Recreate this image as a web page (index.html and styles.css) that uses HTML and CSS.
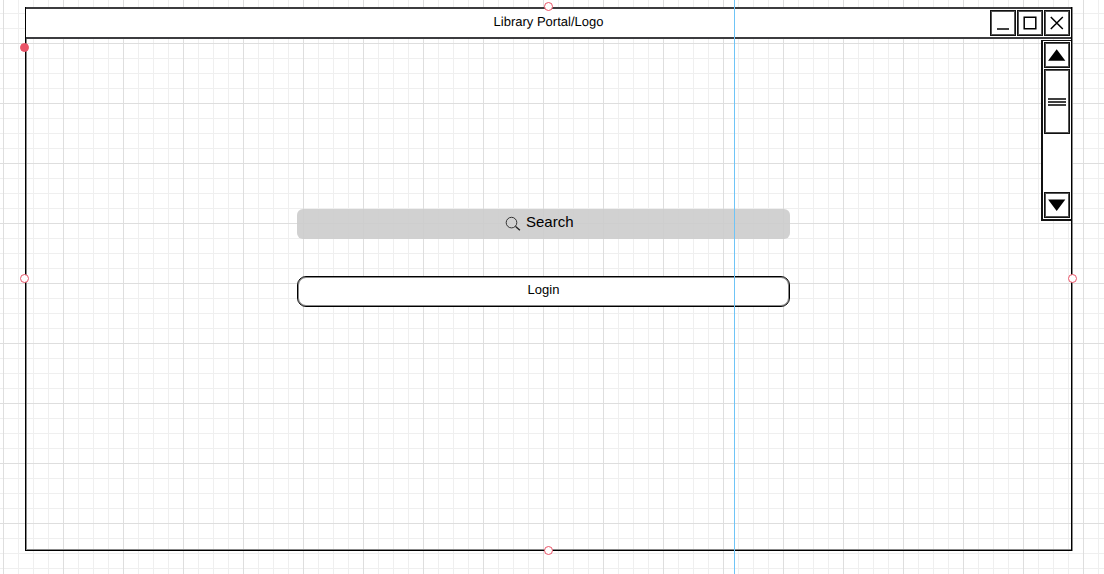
FILE: index.html
```html
<!DOCTYPE html>
<html lang="en">
<head>
<meta charset="utf-8">
<meta name="viewport" content="width=device-width, initial-scale=1">
<title>Library Portal</title>
<link rel="stylesheet" href="styles.css">
</head>
<body>
<div class="canvas">
  <section class="window">
    <header class="titlebar">
      <h1 class="title">Library Portal/Logo</h1>
      <div class="controls">
        <button class="box" type="button" aria-label="Minimize"><svg viewBox="0 0 22 22"><path class="line" d="M5 17h12"/></svg></button>
        <button class="box" type="button" aria-label="Maximize"><svg viewBox="0 0 22 22"><path class="line" d="M5.2 5.2h11.6v11.6h-11.6z"/></svg></button>
        <button class="box" type="button" aria-label="Close"><svg viewBox="0 0 22 22"><path class="line" d="M4.8 5l12 12M16.8 5l-12 12"/></svg></button>
      </div>
    </header>
    <div class="body">
      <main class="content">
        <label class="search">
          <svg class="lens" viewBox="0 0 16 16" aria-hidden="true"><circle cx="6.5" cy="6.6" r="5.3"/><path class="rim" d="M10.3 10.2l1.2 1"/><path class="grip" d="M10.9 10.8l4 3.4"/></svg>
          <input class="query" type="text" placeholder="Search" aria-label="Search">
        </label>
        <button class="login" type="button">Login</button>
      </main>
      <div class="scrollbar">
        <button class="box" type="button" aria-label="Scroll up"><svg viewBox="0 0 22 22"><path d="M10.7 5.2l8.6 11.6h-17.2z"/></svg></button>
        <div class="thumb"><svg viewBox="0 0 22 10"><path class="line" d="M2 2h18M2 5h18M2 8h18"/></svg></div>
        <button class="box down" type="button" aria-label="Scroll down"><svg viewBox="0 0 22 22"><path d="M10.7 17l8.6 -11.4h-17.2z"/></svg></button>
      </div>
    </div>
    <span class="handle top"></span>
    <span class="handle right"></span>
    <span class="handle bottom"></span>
    <span class="handle left"></span>
    <span class="handle anchor"></span>
  </section>
  <div class="guide"></div>
</div>
</body>
</html>
```
FILE: styles.css
```css
* {
  box-sizing: border-box;
}

body {
  margin: 0;
  color: #000;
  font: 13px/26px "Liberation Sans", Arial, sans-serif;
  text-rendering: geometricPrecision;
}

.canvas {
  position: relative;
  display: flex;
  min-height: 100vh;
  padding: 7px 32px 23px 25px;
  background-color: #fff;
  background-image:
    linear-gradient(#dedede 1px, transparent 1px),
    linear-gradient(90deg, #dedede 1px, transparent 1px),
    linear-gradient(#efefef 1px, transparent 1px),
    linear-gradient(90deg, #efefef 1px, transparent 1px);
  background-size: 60px 60px, 60px 60px, 15px 15px, 15px 15px;
  background-position: 3px 43px, 3px 43px, 3px 13px, 3px 13px;
}

.window {
  position: relative;
  display: flex;
  flex: 1;
  flex-direction: column;
  border: solid #000;
  border-width: 0 1px 1px;
  box-shadow: inset 1px -1px 0 #888, 1px 0 0 #888;
}

.titlebar {
  display: grid;
  grid-template-columns: 1fr auto 1fr;
  padding: 0 1px;
  border: solid #3c3c3f;
  border-width: 2px 0;
  background: #fff;
}

.title {
  grid-column: 2;
  margin: 0;
  font-size: 13px;
  font-weight: 400;
}

.controls {
  display: flex;
  justify-self: end;
  gap: 1px;
  padding: 1px 0;
}

.box,
.thumb {
  width: 26px;
  height: 26px;
  padding: 1px;
  border: 1px solid #111;
  background: #fff;
  box-shadow: inset 0 0 0 1px #555;
}

.box svg,
.thumb svg {
  display: block;
  width: 22px;
}

.line {
  fill: none;
  stroke: #000;
  stroke-width: 1.5;
}

.body {
  display: flex;
  flex: 1;
  align-items: flex-start;
}

.content {
  display: flex;
  flex: 1;
  flex-direction: column;
  align-items: center;
  gap: 37px;
  padding: 170px 0 32px 20px;
}

.search,
.login {
  width: 493px;
  max-width: 100%;
}

.search {
  display: flex;
  justify-content: center;
  gap: 5px;
  height: 30px;
  padding-top: 1px;
  border-radius: 6px;
  background: rgba(204, 204, 204, 0.9);
}

.lens {
  width: 16px;
  height: 16px;
  margin-top: 6px;
  fill: none;
  stroke: #222;
}

.lens circle {
  stroke-width: 0.9;
}

.grip {
  stroke-width: 1.5;
}

.query {
  width: 56px;
  height: 24px;
  padding: 0;
  border: 0;
  background: none;
  color: #000;
  font: inherit;
  font-size: 15px;
}

.query::placeholder {
  color: #000;
  opacity: 1;
}

.login {
  height: 31px;
  padding: 0 0 3px;
  border: 1px solid #000;
  border-radius: 9px;
  background: #fff;
  box-shadow: inset 0 0 0 1px #888;
  color: #000;
  font: inherit;
}

.scrollbar {
  display: flex;
  flex-direction: column;
  gap: 1px;
  width: 30px;
  height: 181px;
  margin-top: 1px;
  padding: 1px;
  border: solid #111;
  border-width: 1px 0 2px 2px;
  background: #fff;
}

.thumb {
  display: flex;
  align-items: center;
  height: 65px;
}

.down {
  margin-top: auto;
}

.handle {
  position: absolute;
  width: 9px;
  height: 9px;
  border: 1px solid #ea5468;
  border-radius: 50%;
  background: #fff;
}

.top,
.bottom {
  left: calc(50% - 5px);
}

.top {
  top: -5px;
}

.bottom {
  bottom: -5px;
}

.left,
.right {
  top: 50%;
  margin-top: -5px;
}

.left,
.anchor {
  left: -6px;
}

.right {
  right: -6px;
}

.anchor {
  top: 36px;
  background: #ea5468;
}

.guide {
  position: absolute;
  top: 0;
  bottom: 0;
  left: 734px;
  width: 1px;
  background: #6fc4f6;
}
```
